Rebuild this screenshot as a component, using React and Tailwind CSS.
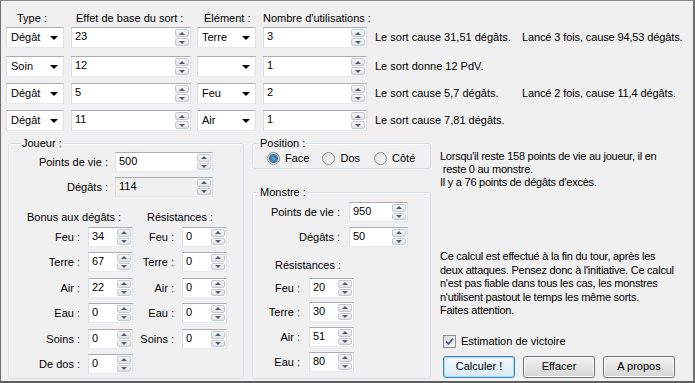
import React from "react"

const spells = [
  { type: "Dégât", base: "23", el: "Terre", n: "3", r1: "Le sort cause 31,51 dégâts.", r2: "Lancé 3 fois, cause 94,53 dégâts.", mt: "mt-[2px]" },
  { type: "Soin", base: "12", el: "", n: "1", r1: "Le sort donne 12 PdV.", r2: "", mt: "mt-[8px]" },
  { type: "Dégât", base: "5", el: "Feu", n: "2", r1: "Le sort cause 5,7 dégâts.", r2: "Lancé 2 fois, cause 11,4 dégâts.", mt: "mt-[6px]" },
  { type: "Dégât", base: "11", el: "Air", n: "1", r1: "Le sort cause 7,81 dégâts.", r2: "", mt: "mt-[6px]" },
]

// spin box arrows
function SpinButtons() {
  return (
    <div className="flex w-[15px] flex-col gap-[1px] py-[1px] pr-[1px]">
      <div className="flex flex-1 items-center justify-center rounded-[2px] border border-[#c3c9d1] bg-linear-to-b from-[#f7f7f7] to-[#dfe2e6]">
        <div className="h-0 w-0 border-x-[3px] border-b-[3px] border-x-transparent border-b-[#4e5c6e]"></div>
      </div>
      <div className="flex flex-1 items-center justify-center rounded-[2px] border border-[#c3c9d1] bg-linear-to-b from-[#f7f7f7] to-[#dfe2e6]">
        <div className="h-0 w-0 border-x-[3px] border-t-[3px] border-x-transparent border-t-[#4e5c6e]"></div>
      </div>
    </div>
  )
}

function Spin({ value, w, gray, h = "h-[20px]" }) {
  return (
    <div className={`flex shrink-0 border border-[#abadb3] border-x-[#dbdfe6] border-b-[#e3e9ef] ${h} ${w} ${gray ? "bg-[#f0f0f0]" : "bg-white"}`}>
      <span className="flex-1 pl-[3px] leading-[16px]">{value}</span>
      <SpinButtons />
    </div>
  )
}

function Combo({ value, w }) {
  return (
    <div className={`flex h-[21px] shrink-0 items-center justify-between border border-[#abadb3] border-x-[#dbdfe6] border-b-[#e3e9ef] bg-white pl-[4px] pr-[5px] ${w}`}>
      <span>{value}</span>
      <div className="h-0 w-0 border-x-[4px] border-t-[4px] border-x-transparent border-t-black"></div>
    </div>
  )
}

function GroupLabel({ text, ml }) {
  return <div className={`-mt-[8px] w-fit bg-[#f0f0f0] px-[1px] leading-[14px] ${ml}`}>{text}</div>
}

function Radio({ checked, label, ml }) {
  return (
    <div className={`flex items-center ${ml}`}>
      <div className="flex h-[13px] w-[13px] items-center justify-center rounded-full border border-[#8e8f8f] bg-linear-to-br from-[#dcdcdc] to-[#fbfbfb]">
        {checked && <div className="h-[7px] w-[7px] rounded-full bg-radial from-[#5fb0e8] to-[#0c4f86] shadow-[0_0_0_1px_#2a5f8e]"></div>}
      </div>
      <span className="ml-[5px]">{label}</span>
    </div>
  )
}

function App() {

  const joueurRows = [
    { a: "Feu :", av: "34", b: "Feu :", bv: "0", mt: "mt-[3px]" },
    { a: "Terre :", av: "67", b: "Terre :", bv: "0", mt: "mt-[5px]" },
    { a: "Air :", av: "22", b: "Air :", bv: "0", mt: "mt-[6px]" },
    { a: "Eau :", av: "0", b: "Eau :", bv: "0", mt: "mt-[5px]" },
    { a: "Soins :", av: "0", b: "Soins :", bv: "0", mt: "mt-[6px]" },
    { a: "De dos :", av: "0", b: null, bv: null, mt: "mt-[5px]" },
  ]

  const monstreRows = [
    { l: "Feu :", v: "20", mt: "mt-[6px]" },
    { l: "Terre :", v: "30", mt: "mt-[4px]" },
    { l: "Air :", v: "51", mt: "mt-[5px]" },
    { l: "Eau :", v: "80", mt: "mt-[5px]" },
  ]

  return (

    <div className="flex h-[383px] w-[695px] flex-col overflow-hidden border-t border-l border-r-2 border-b-2 border-t-[#8a8a8a] border-l-[#6e6e6e] border-r-[#6e6e6e] border-b-[#5e5e5e] bg-[#f0f0f0] font-['Liberation_Sans',Arial,sans-serif] text-[11px] text-black">

      {/* Spells */}
      <div className="flex flex-col pl-[5px] pt-[10px]">

        <div className="flex h-[14px] leading-[14px]">
          <span className="w-[65px] pl-[11px]">Type :</span>
          <span className="w-[126px] pl-[5px]">Effet de base du sort :</span>
          <span className="w-[66px] pl-[7px]">Élément :</span>
          <span>Nombre d'utilisations :</span>
        </div>

        {spells.map((s, i) => (
          <div key={i} className={`flex h-[21px] items-center ${s.mt}`}>
            <Combo value={s.type} w="w-[58px]" />
            <div className="ml-[7px]"><Spin value={s.base} w="w-[120px]" h="h-[21px]" /></div>
            <div className="ml-[6px]"><Combo value={s.el} w="w-[59px]" /></div>
            <div className="ml-[7px]"><Spin value={s.n} w="w-[104px]" h="h-[21px]" /></div>
            <span className="ml-[8px] w-[147px]">{s.r1}</span>
            <span className="tracking-[-0.12px]">{s.r2}</span>
          </div>
        ))}

      </div>

      {/* Lower part */}
      <div className="mt-[12px] flex h-[236px] pl-[7px]">

        {/* Joueur */}
        <div className="flex w-[236px] flex-col rounded-[3px] border border-[#d5dfe5] shadow-[inset_1px_1px_0_#fff]">

          <GroupLabel text="Joueur :" ml="ml-[12px]" />

          <div className="mt-[2px] flex items-center">
            <span className="w-[99px] text-right">Points de vie :</span>
            <div className="ml-[7px]"><Spin value="500" w="w-[98px]" /></div>
          </div>

          <div className="mt-[5px] flex items-center">
            <span className="w-[99px] text-right">Dégâts :</span>
            <div className="ml-[7px]"><Spin value="114" w="w-[98px]" gray /></div>
          </div>

          <div className="mt-[13px] flex h-[14px] leading-[14px]">
            <span className="ml-[18px] w-[120px]">Bonus aux dégâts :</span>
            <span>Résistances :</span>
          </div>

          {joueurRows.map((r, i) => (
            <div key={i} className={`flex items-center ${r.mt}`}>
              <span className="w-[71px] text-right">{r.a}</span>
              <div className="ml-[8px]"><Spin value={r.av} w="w-[45px]" /></div>
              {r.b && (
                <>
                  <span className="w-[41px] text-right">{r.b}</span>
                  <div className="ml-[8px]"><Spin value={r.bv} w="w-[45px]" /></div>
                </>
              )}
            </div>
          ))}

        </div>

        {/* Position + Monstre */}
        <div className="ml-[8px] flex w-[179px] flex-col">

          <div className="flex h-[26px] flex-col rounded-[3px] border border-[#d5dfe5] shadow-[inset_1px_1px_0_#fff]">
            <GroupLabel text="Position :" ml="ml-[6px]" />
            <div className="mt-[1px] flex h-[14px] items-center">
              <Radio checked label="Face" ml="ml-[14px]" />
              <Radio label="Dos" ml="ml-[13px]" />
              <Radio label="Côté" ml="ml-[14px]" />
            </div>
          </div>

          <div className="mt-[23px] flex flex-1 flex-col rounded-[3px] border border-[#d5dfe5] shadow-[inset_1px_1px_0_#fff]">

            <GroupLabel text="Monstre :" ml="ml-[6px]" />

            <div className="mt-[3px] flex items-center">
              <span className="w-[87px] text-right">Points de vie :</span>
              <div className="ml-[9px]"><Spin value="950" w="w-[59px]" /></div>
            </div>

            <div className="mt-[5px] flex items-center">
              <span className="w-[87px] text-right">Dégâts :</span>
              <div className="ml-[9px]"><Spin value="50" w="w-[59px]" /></div>
            </div>

            <div className="ml-[22px] mt-[11px] leading-[14px]">Résistances :</div>

            {monstreRows.map((r, i) => (
              <div key={i} className={`flex items-center ${r.mt}`}>
                <span className="w-[47px] text-right">{r.l}</span>
                <div className="ml-[9px]"><Spin value={r.v} w="w-[45px]" /></div>
              </div>
            ))}

          </div>

        </div>

        {/* Results */}
        <div className="ml-[9px] flex flex-1 flex-col">

          <p className="mt-[7px] leading-[13px] tracking-[-0.25px]">
            Lorsqu'il reste 158 points de vie au joueur, il en<br />
            &nbsp;reste 0 au monstre.<br />
            Il y a 76 points de dégâts d'excès.
          </p>

          <p className="mt-[61px] leading-[13.5px] tracking-[-0.25px]">
            Ce calcul est effectué à la fin du tour, après les<br />
            deux attaques. Pensez donc à l'initiative. Ce calcul<br />
            n'est pas fiable dans tous les cas, les monstres<br />
            n'utilisent pastout le temps les même sorts.<br />
            Faites attention.
          </p>

          <div className="ml-[3px] mt-[17px] flex h-[14px] items-center">
            <div className="flex h-[13px] w-[13px] items-center justify-center border border-[#8e8f8f] bg-linear-to-br from-[#dcdcdc] to-[#fbfbfb]">
              <svg width="9" height="9" viewBox="0 0 9 9">
                <path d="M1 4.5 L3.5 7 L8 1.5" fill="none" stroke="#4a5f97" strokeWidth="1.8" />
              </svg>
            </div>
            <span className="ml-[5px]">Estimation de victoire</span>
          </div>

          <div className="ml-[3px] mt-[7px] flex gap-[8px]">
            <button className="h-[22px] w-[72px] rounded-[3px] border border-[#3c7fb1] bg-linear-to-b from-[#f2f9fd] to-[#d7e9f5] shadow-[inset_0_0_0_1px_#a8dbf6]">Calculer !</button>
            <button className="h-[22px] w-[72px] rounded-[3px] border border-[#707070] bg-linear-to-b from-[#f2f2f2] to-[#d5d5d5] shadow-[inset_0_0_0_1px_#fcfcfc]">Effacer</button>
            <button className="h-[22px] w-[72px] rounded-[3px] border border-[#707070] bg-linear-to-b from-[#f2f2f2] to-[#d5d5d5] shadow-[inset_0_0_0_1px_#fcfcfc]">A propos</button>
          </div>

        </div>

      </div>

    </div>

  )

}

export default App
